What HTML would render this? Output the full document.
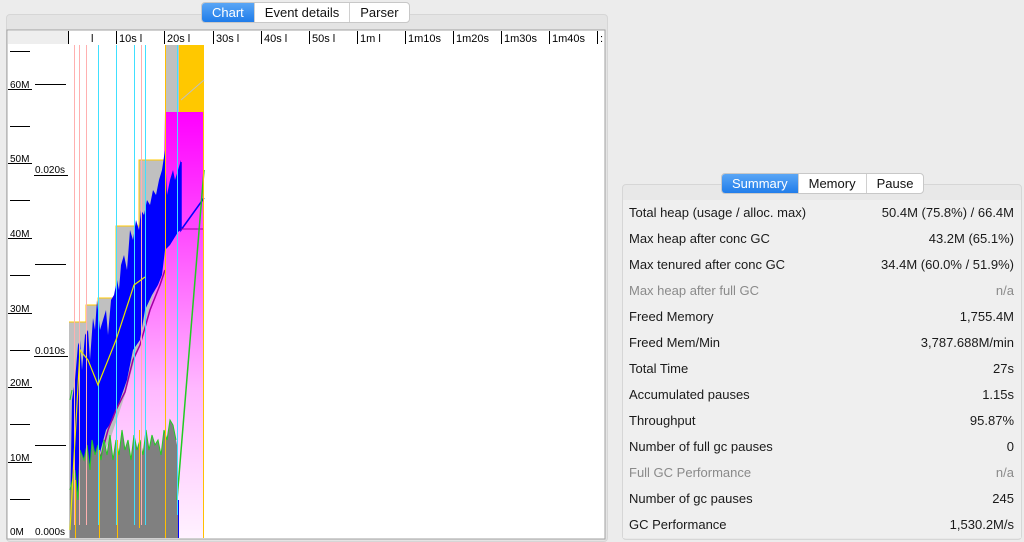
<!DOCTYPE html>
<html><head><meta charset="utf-8"><style>
body{margin:0;width:1024px;height:541px;background:#ececec;font-family:"Liberation Sans",sans-serif;position:relative;overflow:hidden}
.tabs{position:absolute;display:flex;height:19px;border:1px solid #c8c8c8;border-radius:4px;background:#fff;font-size:13px;line-height:19px;overflow:hidden}
.tabs div{padding:0 10px;border-left:1px solid #d0d0d0;color:#111}
.tabs div.on{background:linear-gradient(#5aa6f5,#1f7cea);color:#fff;border-left:none}
.row{position:absolute;left:629px;width:385px;font-size:13px;color:#1a1a1a;height:20px;line-height:20px}
.row span{position:absolute;right:0}
.row.g{color:#8a8a8a}
</style></head><body>
<div style="position:absolute;left:6px;top:14px;width:600px;height:526px;background:#e4e4e4;border:1px solid #d6d6d6;border-radius:4px"></div>
<div class="tabs" style="left:201px;top:2px"><div class="on" style="padding:0 10px">Chart</div><div>Event details</div><div>Parser</div></div>
<svg style="position:absolute;left:0;top:0" width="1024" height="541" font-family="Liberation Sans, sans-serif" font-size="10">
<defs><linearGradient id="mg" x1="0" y1="112" x2="0" y2="538" gradientUnits="userSpaceOnUse"><stop offset="0" stop-color="#ff00ff"/><stop offset="0.3" stop-color="#ff50ff"/><stop offset="0.65" stop-color="#ffb8ff"/><stop offset="1" stop-color="#fff2ff"/></linearGradient></defs>
<rect x="7" y="30" width="598" height="509" fill="#fff" stroke="#a0a0a0"/>
<rect x="8" y="31" width="60" height="13" fill="#eeeeee"/>
<g fill="#000" font-size="11"><text x="91" y="42">l</text><text x="119" y="42">10s l</text><text x="167" y="42">20s l</text><text x="216" y="42">30s l</text><text x="264" y="42">40s l</text><text x="312" y="42">50s l</text><text x="360" y="42">1m  l</text><text x="408" y="42">1m10s</text><text x="456" y="42">1m20s</text><text x="504" y="42">1m30s</text><text x="552" y="42">1m40s</text><text x="600" y="42">:</text></g>
<g stroke="#000" stroke-width="1"><path d="M68.5 31v13M116.5 31v13M164.5 31v13M213.5 31v13M261.5 31v13M309.5 31v13M357.5 31v13M405.5 31v13M453.5 31v13M501.5 31v13M549.5 31v13M597.5 31v13"/></g>
<g fill="#000" font-size="10"><text x="10" y="88">60M</text><text x="10" y="162">50M</text><text x="10" y="237">40M</text><text x="10" y="312">30M</text><text x="10" y="386">20M</text><text x="10" y="461">10M</text><text x="10" y="535">0M</text>
<text x="35" y="173">0.020s</text><text x="35" y="354">0.010s</text><text x="35" y="535">0.000s</text></g>
<g stroke="#000"><path d="M8 89.5h24M8 163.5h24M8 238.5h24M8 313.5h24M8 387.5h24M8 462.5h24M10 51.5h20M10 126.5h20M10 200.5h20M10 275.5h20M10 350.5h20M10 424.5h20M10 499.5h20M35 84.5h31M35 264.5h31M35 445.5h31M34 175.5h34M34 356.5h34"/></g>
<path d="M69 538V322H86V305H98V298H116V226H139V160H165V45H204V538Z" fill="#c0c0c0"/>
<rect x="179" y="45" width="25" height="67" fill="#ffc800"/>
<path d="M181 100L204 80" stroke="#c0c0c0"/>
<path d="M69 322H86V305H98V298H116V226H139V160H165" fill="none" stroke="#ffc800"/>
<path d="M70 530L82 500L95 470L110 440L125 395L140 340L152 300L162 270L165 112H204V538H70Z" fill="url(#mg)"/>
<path d="M70 520L72 400L75 380L78 345L80 340L82 370L85 335L88 330L90 360L93 318L95 330L97 300L100 330L103 320L106 310L108 335L111 300L114 295L117 280L119 290L121 265L124 255L127 270L130 230L133 240L136 220L139 230L141 210L144 215L147 200L150 205L153 190L156 195L159 180L162 170L165 150L167 195L170 180L173 170L175 180L178 170L181 160L181 230L178 232L170 245L165 250L162 275L158 285L152 295L145 310L140 340L133 350L127 380L120 400L113 420L106 430L98 460L92 470L85 495L80 510L73 525Z" fill="#0000ff"/>
<path d="M181 162L181 230L204 198" fill="none" stroke="#0000ff" stroke-width="1.5"/>
<path d="M75 520L82 495L86 480L92 470L100 460L108 430L116 410L125 392L133 360L140 345L150 310L160 285L165 270" fill="none" stroke="#a000a0" stroke-width="1.5"/>
<path d="M181 229H204" stroke="#a000a0"/>
<path d="M70 538V490L75 470L78 500L80 450L84 460L87 445L90 470L92 440L95 455L98 445L101 460L104 440L107 455L110 435L113 460L116 440L119 455L122 430L125 450L128 440L131 460L134 435L137 450L140 440L143 455L146 430L149 450L152 435L155 445L158 440L161 455L164 430L167 440L170 420L173 425L176 440L178 450V538Z" fill="#808080"/>
<path d="M70 490L75 470L78 500L80 450L84 460L87 445L90 470L92 440L95 455L98 445L101 460L104 440L107 455L110 435L113 460L116 440L119 455L122 430L125 450L128 440L131 460L134 435L137 450L140 440L143 455L146 430L149 450L152 435L155 445L158 440L161 455L164 430L167 440L170 420L173 425L176 440" fill="none" stroke="#22cc22"/>
<path d="M177 500L204 170" stroke="#22cc22" stroke-width="1.5"/>
<path d="M70 400L72 390" stroke="#22cc22"/>
<g stroke="#ffb0b0"><path d="M74.5 45v480M79.5 45v480M86.5 45v480M141.5 45v480"/></g>
<g stroke="#40e0ff"><path d="M98.5 45v480M116.5 45v480M134.5 45v480M145.5 45v480M177.5 45v470"/></g>
<g stroke="#ffc000"><path d="M75.5 480v58M99.5 450v88M117.5 440v98M139.5 430v98M165.5 45v493M203.5 112v426"/></g>
<path d="M178.5 500v38" stroke="#0000ff"/>
<path d="M70 530L80 350L88 360L98 385L116 340L134 285L145 277" fill="none" stroke="#e8e800" stroke-width="1.2"/>
</svg>
<div style="position:absolute;left:622px;top:184px;width:398px;height:354px;background:#e8e8e8;border:1px solid #d6d6d6;border-radius:4px"></div>
<div style="position:absolute;left:623px;top:200px;width:398px;height:338px;background:#efefef"></div>
<div class="tabs" style="left:721px;top:173px"><div class="on">Summary</div><div>Memory</div><div>Pause</div></div>
<div class="row" style="top:203px">Total heap (usage / alloc. max)<span>50.4M (75.8%) / 66.4M</span></div>
<div class="row" style="top:229px">Max heap after conc GC<span>43.2M (65.1%)</span></div>
<div class="row" style="top:255px">Max tenured after conc GC<span>34.4M (60.0% / 51.9%)</span></div>
<div class="row g" style="top:281px">Max heap after full GC<span>n/a</span></div>
<div class="row" style="top:307px">Freed Memory<span>1,755.4M</span></div>
<div class="row" style="top:333px">Freed Mem/Min<span>3,787.688M/min</span></div>
<div class="row" style="top:359px">Total Time<span>27s</span></div>
<div class="row" style="top:385px">Accumulated pauses<span>1.15s</span></div>
<div class="row" style="top:411px">Throughput<span>95.87%</span></div>
<div class="row" style="top:437px">Number of full gc pauses<span>0</span></div>
<div class="row g" style="top:463px">Full GC Performance<span>n/a</span></div>
<div class="row" style="top:489px">Number of gc pauses<span>245</span></div>
<div class="row" style="top:515px">GC Performance<span>1,530.2M/s</span></div>
</body></html>
